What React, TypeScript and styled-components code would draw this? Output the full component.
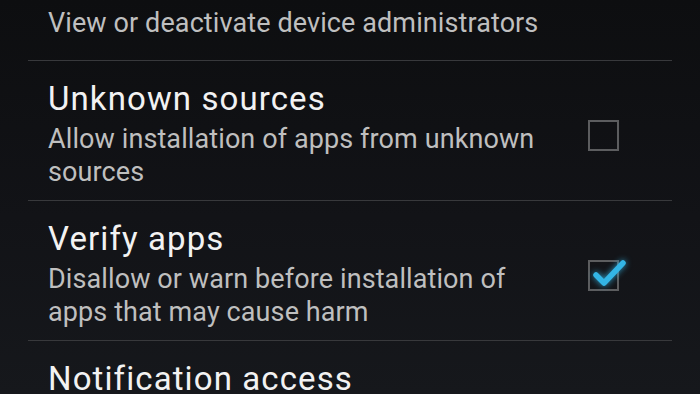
import React from 'react';
import styled, { createGlobalStyle } from 'styled-components';

const GlobalStyle = createGlobalStyle`
    html, body {
        margin: 0;
        padding: 0;
        background: #111215;
    }
    body {
        font-family: Roboto, "Noto Sans", sans-serif;
    }
`;

interface ISetting {
    title: string;
    summary: string;
    checkbox?: 'on' | 'off';
}

const settings: ISetting[] = [
    { title: 'Device administrators', summary: 'View or deactivate device administrators' },
    { title: 'Unknown sources', summary: 'Allow installation of apps from unknown sources', checkbox: 'off' },
    { title: 'Verify apps', summary: 'Disallow or warn before installation of apps that may cause harm', checkbox: 'on' },
    { title: 'Notification access', summary: 'No apps can read notifications' },
];

const Screen = styled.div`
    width: 700px;
    height: 394px;
    overflow: hidden;
    background: linear-gradient(180deg, #0d0e10 0%, #121317 55%, #16181c 100%);
`;

const List = styled.ul`
    list-style: none;
    margin: -55px 28px 0 28px;
    padding: 0;
`;

const Row = styled.li`
    display: flex;
    align-items: center;
    min-height: 84px;
    padding: 20px 53px 11px 20px;
    border-bottom: 1px solid #38393c;
`;

const TextBlock = styled.div`
    flex: 1;
    align-self: flex-start;
    max-width: 505px;
`;

const Title = styled.div`
    font-size: 33px;
    line-height: 36px;
    letter-spacing: 1.1px;
    color: #f2f2f2;
    margin-bottom: 6px;
    white-space: nowrap;
`;

const Summary = styled.div`
    font-size: 27px;
    line-height: 33px;
    letter-spacing: 0.1px;
    color: #bfbfbf;
`;

const Box = styled.div`
    position: relative;
    box-sizing: border-box;
    width: 31px;
    height: 31px;
    margin-left: auto;
    border: 2px solid #5c5d5f;
    flex-shrink: 0;
`;

const Tick = styled.svg`
    position: absolute;
    left: 1px;
    top: -7px;
    width: 38px;
    height: 34px;
    overflow: visible;
    filter: drop-shadow(0 0 3px rgba(51, 181, 229, 0.85));
`;

const CheckBox: React.FC<{ checked: boolean }> = ({ checked }) => (
    <Box>
        {checked && (
            <Tick viewBox="0 0 38 34">
                <path d="M5 20 L13 28 L32 8" fill="none" stroke="#33b5e5" strokeWidth="5.5" strokeLinecap="round" strokeLinejoin="round" />
            </Tick>
        )}
    </Box>
);

export default function App() {
    return (
        <Screen>
            <GlobalStyle />
            <List>
                {settings.map((s) => (
                    <Row key={s.title}>
                        <TextBlock>
                            <Title>{s.title}</Title>
                            <Summary>{s.summary}</Summary>
                        </TextBlock>
                        {s.checkbox && <CheckBox checked={s.checkbox === 'on'} />}
                    </Row>
                ))}
            </List>
        </Screen>
    );
}
